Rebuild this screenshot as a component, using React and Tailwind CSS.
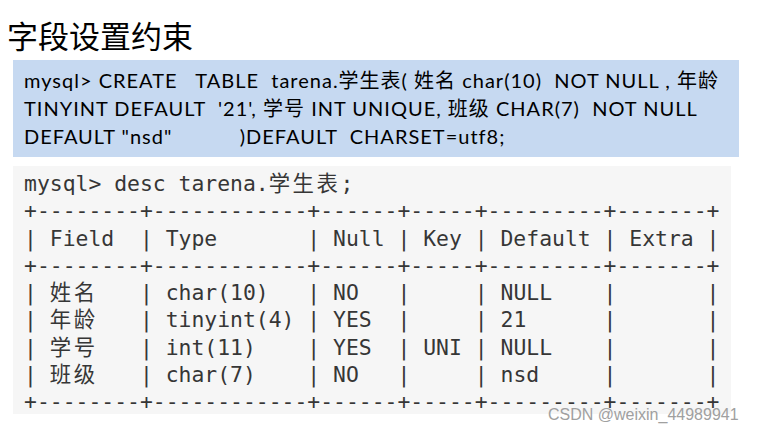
const Cjk = ({ text, w }) => (
  <span className={w ? "inline-block tracking-[2.5px] w-[6ch]" : "inline-block tracking-[2.5px]"}>{text}</span>
);

const Row = ({ name, rest }) => (
  <div>
    {"| "}
    <Cjk text={name} w />
    {rest}
  </div>
);

const App = () => {
  const border = "+--------+------------+------+-----+---------+-------+";
  return (
    <div className="relative w-[759px] h-[434px] bg-white overflow-hidden">
      <div className="pl-[7px] pt-[19px] text-[31px] leading-[31px] text-black font-['Noto_Sans_CJK_SC',sans-serif]">
        字段设置约束
      </div>

      <div className="ml-[13px] mt-[10px] w-[726px] h-[97px] bg-[#c6d9f1] pl-[11px] pt-[6px] text-[20px] leading-[28px] tracking-[1px] text-black whitespace-pre font-['Lato','Noto_Sans_CJK_SC',sans-serif]">
        <div>mysql&gt; CREATE   TABLE  tarena.学生表( 姓名 char(10)  NOT NULL , 年龄</div>
        <div>TINYINT DEFAULT  '21', 学号 INT UNIQUE, 班级 CHAR(7)  NOT NULL</div>
        <div>DEFAULT "nsd"           )DEFAULT  CHARSET=utf8;</div>
      </div>

      <div className="ml-[13px] mt-[9px] w-[718px] h-[248px] bg-[#f6f6f6] pl-[11px] pt-[4px] text-[21.4px] leading-[27.3px] text-[#363636] whitespace-pre font-['DejaVu_Sans_Mono','Noto_Sans_CJK_SC',monospace]">
        <div>
          mysql&gt; desc tarena.<Cjk text="学生表" />;
        </div>
        <div>{border}</div>
        <div>| Field  | Type       | Null | Key | Default | Extra |</div>
        <div>{border}</div>
        <Row name="姓名" rest=" | char(10)   | NO   |     | NULL    |       |" />
        <Row name="年龄" rest=" | tinyint(4) | YES  |     | 21      |       |" />
        <Row name="学号" rest=" | int(11)    | YES  | UNI | NULL    |       |" />
        <Row name="班级" rest=" | char(7)    | NO   |     | nsd     |       |" />
        <div>{border}</div>
      </div>

      <div className="absolute left-[548px] top-[406px] text-[16px] leading-[18px] text-[#a0a0a0] font-['Liberation_Sans',Arial,sans-serif]">
        CSDN @weixin_44989941
      </div>
    </div>
  );
};

export default App;
